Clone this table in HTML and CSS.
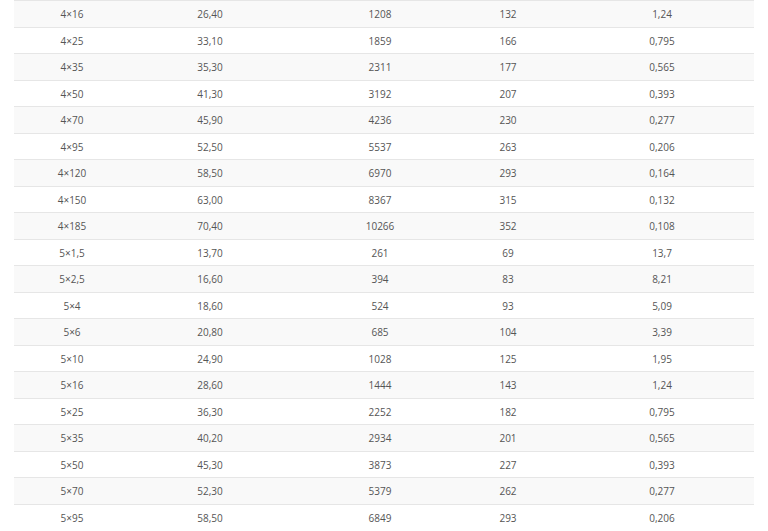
FILE: index.html
```html
<!DOCTYPE html>
<html lang="ru">
<head>
<meta charset="utf-8">
<link rel="stylesheet" href="styles.css">
</head>
<body>
<table class="spec">
<colgroup>
<col class="c1"><col class="c2"><col class="c3"><col class="c4"><col class="c5">
</colgroup>
<tbody>
<tr><td>4×16</td><td>26,40</td><td>1208</td><td>132</td><td>1,24</td></tr>
<tr><td>4×25</td><td>33,10</td><td>1859</td><td>166</td><td>0,795</td></tr>
<tr><td>4×35</td><td>35,30</td><td>2311</td><td>177</td><td>0,565</td></tr>
<tr><td>4×50</td><td>41,30</td><td>3192</td><td>207</td><td>0,393</td></tr>
<tr><td>4×70</td><td>45,90</td><td>4236</td><td>230</td><td>0,277</td></tr>
<tr><td>4×95</td><td>52,50</td><td>5537</td><td>263</td><td>0,206</td></tr>
<tr><td>4×120</td><td>58,50</td><td>6970</td><td>293</td><td>0,164</td></tr>
<tr><td>4×150</td><td>63,00</td><td>8367</td><td>315</td><td>0,132</td></tr>
<tr><td>4×185</td><td>70,40</td><td>10266</td><td>352</td><td>0,108</td></tr>
<tr><td>5×1,5</td><td>13,70</td><td>261</td><td>69</td><td>13,7</td></tr>
<tr><td>5×2,5</td><td>16,60</td><td>394</td><td>83</td><td>8,21</td></tr>
<tr><td>5×4</td><td>18,60</td><td>524</td><td>93</td><td>5,09</td></tr>
<tr><td>5×6</td><td>20,80</td><td>685</td><td>104</td><td>3,39</td></tr>
<tr><td>5×10</td><td>24,90</td><td>1028</td><td>125</td><td>1,95</td></tr>
<tr><td>5×16</td><td>28,60</td><td>1444</td><td>143</td><td>1,24</td></tr>
<tr><td>5×25</td><td>36,30</td><td>2252</td><td>182</td><td>0,795</td></tr>
<tr><td>5×35</td><td>40,20</td><td>2934</td><td>201</td><td>0,565</td></tr>
<tr><td>5×50</td><td>45,30</td><td>3873</td><td>227</td><td>0,393</td></tr>
<tr><td>5×70</td><td>52,30</td><td>5379</td><td>262</td><td>0,277</td></tr>
<tr><td>5×95</td><td>58,50</td><td>6849</td><td>293</td><td>0,206</td></tr>
</tbody>
</table>
</body>
</html>
```
FILE: styles.css
```css
html, body {
  margin: 0;
  padding: 0;
  background: #ffffff;
}
body {
  font-family: "Open Sans", "Liberation Sans", sans-serif;
  font-size: 10px;
  color: #555555;
}
.spec {
  margin-left: 14px;
  width: 740px;
  border-collapse: separate;
  border-spacing: 0;
  table-layout: fixed;
}
.c1 { width: 116px; }
.c2 { width: 160px; }
.c3 { width: 180px; }
.c4 { width: 76px; }
.c5 { width: 208px; }
.spec td {
  padding: 7px 0 5px;
  line-height: 13.5px;
  text-align: center;
  border-top: 1px solid #e6e6e6;
}
.spec td:last-child {
  padding-left: 24px;
}
.spec tr:nth-child(odd) td {
  background: #f9f9f9;
}
```
